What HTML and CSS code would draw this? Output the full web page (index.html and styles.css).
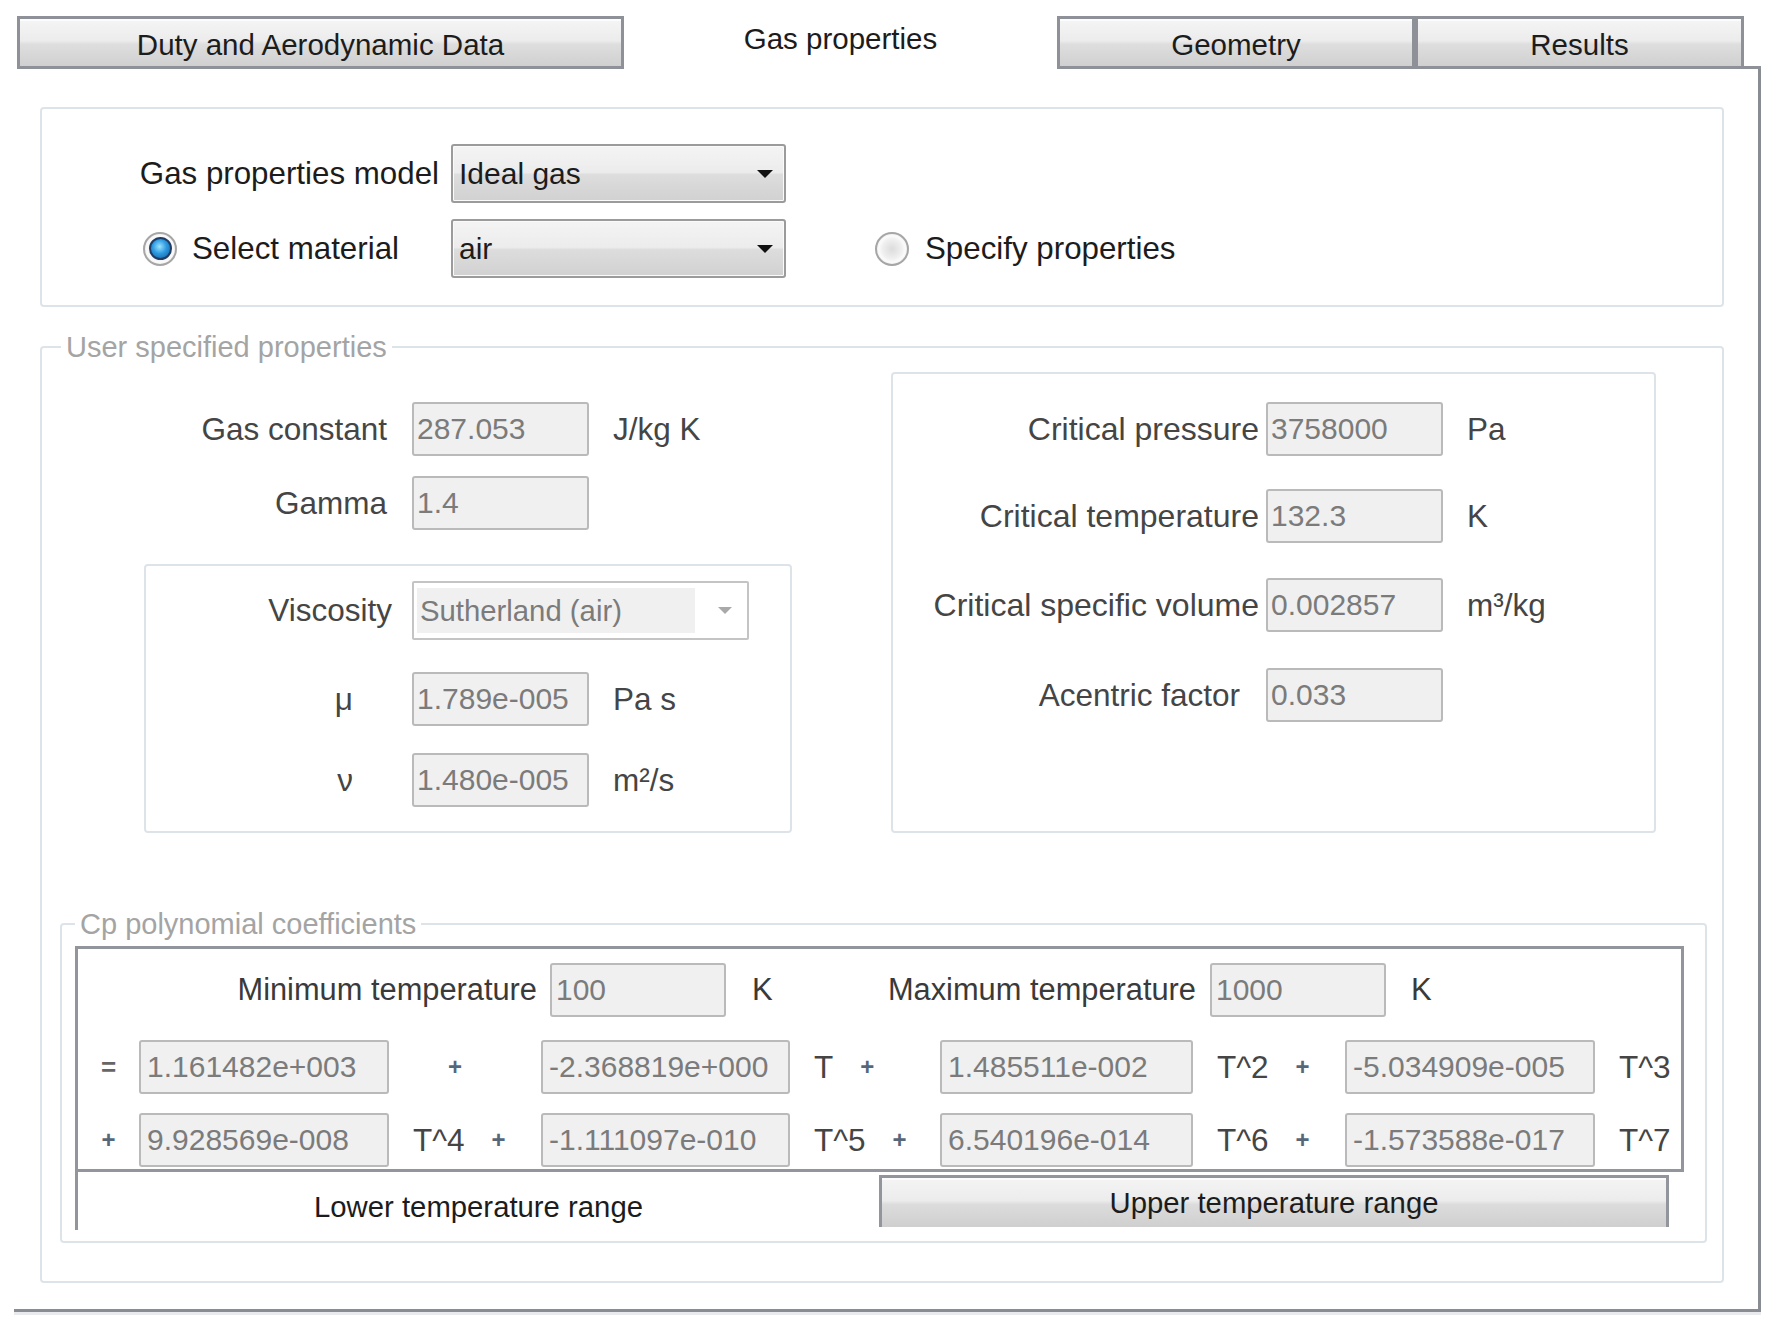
FILE: index.html
```html
<!DOCTYPE html>
<html lang="en">
<head>
<meta charset="utf-8">
<title>Gas properties</title>
<link rel="stylesheet" href="styles.css">
</head>
<body>
<div class="window">
  <div class="tabstrip">
    <div class="tab tab-duty">Duty and Aerodynamic Data</div>
    <div class="tab-active">Gas properties</div>
    <div class="tab tab-geom">Geometry</div>
    <div class="tab tab-results">Results</div>
    <div class="tab-fill"></div>
  </div>

  <div class="panel">
    <fieldset class="group group-model">
      <div class="row">
        <span class="lbl-model">Gas properties model</span>
        <div class="combo"><span class="combo-text">Ideal gas</span><span class="arrow"></span></div>
      </div>
      <div class="row row-material">
        <div class="opt opt-select"><span class="radio radio-on"></span><span class="opt-text">Select material</span></div>
        <div class="combo"><span class="combo-text">air</span><span class="arrow"></span></div>
        <div class="opt opt-specify"><span class="radio"></span><span class="opt-text">Specify properties</span></div>
      </div>
    </fieldset>

    <fieldset class="group group-user">
      <legend class="legend">User specified properties</legend>
      <div class="user-cols">
        <div class="user-left">
          <div class="frow">
            <span class="flabel flabel-gas">Gas constant</span>
            <span class="tb tb-prop">287.053</span>
            <span class="unit">J/kg K</span>
          </div>
          <div class="frow frow-gamma">
            <span class="flabel flabel-gas">Gamma</span>
            <span class="tb tb-prop">1.4</span>
          </div>
          <div class="subgroup visc">
            <div class="frow frow-combo">
              <span class="flabel flabel-visc">Viscosity</span>
              <div class="combo-dis"><span class="combo-field">Sutherland (air)</span><span class="arrow arrow-dis"></span></div>
            </div>
            <div class="frow frow-mu">
              <span class="flabel flabel-visc flabel-greek">μ</span>
              <span class="tb tb-prop">1.789e-005</span>
              <span class="unit">Pa s</span>
            </div>
            <div class="frow frow-nu">
              <span class="flabel flabel-visc flabel-greek">ν</span>
              <span class="tb tb-prop">1.480e-005</span>
              <span class="unit">m²/s</span>
            </div>
          </div>
        </div>

        <div class="subgroup crit">
          <div class="frow">
            <span class="flabel flabel-crit">Critical pressure</span>
            <span class="tb tb-prop">3758000</span>
            <span class="unit">Pa</span>
          </div>
          <div class="frow crow-2">
            <span class="flabel flabel-crit">Critical temperature</span>
            <span class="tb tb-prop">132.3</span>
            <span class="unit">K</span>
          </div>
          <div class="frow crow-3">
            <span class="flabel flabel-crit">Critical specific volume</span>
            <span class="tb tb-prop">0.002857</span>
            <span class="unit">m³/kg</span>
          </div>
          <div class="frow crow-4">
            <span class="flabel flabel-crit flabel-acentric">Acentric factor</span>
            <span class="tb tb-prop">0.033</span>
          </div>
        </div>
      </div>

      <fieldset class="group group-cp">
        <legend class="legend legend-cp">Cp polynomial coefficients</legend>
        <div class="tabpage">
          <div class="temp-row">
            <span class="tlabel tlabel-min">Minimum temperature</span>
            <span class="tb tb-temp">100</span>
            <span class="tunit tunit-min">K</span>
            <span class="tlabel tlabel-max">Maximum temperature</span>
            <span class="tb tb-temp tb-temp-max">1000</span>
            <span class="tunit tunit-max">K</span>
          </div>
          <div class="coef-grid">
            <span class="sym sym-eq">=</span>
            <span class="tb tb-coef">1.161482e+003</span>
            <span class="term term-lead"><span class="plus">+</span></span>
            <span class="tb tb-coef">-2.368819e+000</span>
            <span class="term"><span class="pow">T</span><span class="plus">+</span></span>
            <span class="tb tb-coef">1.485511e-002</span>
            <span class="term"><span class="pow">T^2</span><span class="plus">+</span></span>
            <span class="tb tb-coef">-5.034909e-005</span>
            <span class="term"><span class="pow">T^3</span></span>

            <span class="sym"><span class="plus plus-lead">+</span></span>
            <span class="tb tb-coef">9.928569e-008</span>
            <span class="term"><span class="pow">T^4</span><span class="plus">+</span></span>
            <span class="tb tb-coef">-1.111097e-010</span>
            <span class="term"><span class="pow">T^5</span><span class="plus">+</span></span>
            <span class="tb tb-coef">6.540196e-014</span>
            <span class="term"><span class="pow">T^6</span><span class="plus">+</span></span>
            <span class="tb tb-coef">-1.573588e-017</span>
            <span class="term"><span class="pow">T^7</span></span>
          </div>
        </div>
        <div class="bottom-tabs">
          <div class="btab-lower">Lower temperature range</div>
          <div class="btab-upper">Upper temperature range</div>
        </div>
      </fieldset>
    </fieldset>
  </div>
</div>
</body>
</html>
```

FILE: styles.css
```css
* {
  box-sizing: border-box;
}

html,
body {
  margin: 0;
  padding: 0;
  background: #ffffff;
}

body {
  font-family: "Liberation Sans", Arial, sans-serif;
  font-size: 30px;
  color: #1c1c1c;
}

.window {
  width: 1777px;
  height: 1329px;
  padding: 16px 0 0 14px;
  overflow: hidden;
}

/* ---------- top tab strip ---------- */
.tabstrip {
  display: flex;
  width: 1747px;
  height: 53px;
}

.tab {
  height: 53px;
  border: 3px solid #8f9199;
  background: linear-gradient(#f5f5f5 0%, #ececec 46%, #dedede 54%, #d0d0d0 100%);
  box-shadow: inset 0 2px 0 #fcfcfc;
  display: flex;
  align-items: center;
  justify-content: center;
  padding-top: 4px;
  font-size: 29.5px;
  color: #1c1c1c;
}

.tab-duty {
  margin-left: 3px;
  width: 607px;
}

.tab-active {
  width: 433px;
  display: flex;
  align-items: center;
  justify-content: center;
  padding-bottom: 7px;
  font-size: 29.5px;
}

.tab-geom {
  width: 358px;
}

.tab-results {
  width: 329px;
}

.tab-fill {
  flex: 1;
  border-bottom: 3px solid #8f9199;
}

/* ---------- panel ---------- */
.panel {
  width: 1747px;
  border-right: 3px solid #8a8c94;
  border-bottom: 3px solid #8a8c94;
  padding: 38px 34px 26px 26px;
  box-shadow: 0 3px 0 #e8eaed;
}

.group {
  margin: 0;
  padding: 0;
  min-width: 0;
  border: 2px solid #dde4e9;
  border-radius: 4px;
}

.legend {
  margin-left: 19px;
  padding: 0 5px;
  font-size: 29px;
  line-height: 36px;
  color: #a4a4a4;
}

/* ---------- group 1 ---------- */
.group-model {
  padding: 35px 0 27px 0;
}

.row {
  display: flex;
  align-items: center;
  height: 59px;
}

.row-material {
  margin-top: 16px;
}

.lbl-model {
  width: 397px;
  margin-right: 12px;
  text-align: right;
  font-size: 31.3px;
  white-space: nowrap;
}

.opt-text {
  font-size: 31.3px;
  white-space: nowrap;
}

.combo {
  width: 335px;
  height: 59px;
  border: 2px solid #9b9b9b;
  border-radius: 3px;
  background: linear-gradient(#f4f4f4 0%, #ececec 48%, #dddddd 52%, #d1d1d1 100%);
  box-shadow: inset 0 0 0 1px #fafafa;
  display: flex;
  align-items: center;
  justify-content: space-between;
  padding: 0 11px 0 6px;
}

.arrow {
  width: 0;
  height: 0;
  border-left: 8px solid transparent;
  border-right: 8px solid transparent;
  border-top: 8px solid #111111;
}

.opt {
  display: flex;
  align-items: center;
}

.opt-select {
  width: 409px;
  padding-left: 101px;
}

.opt-specify {
  margin-left: 89px;
}

.radio {
  flex: none;
  width: 34px;
  height: 34px;
  margin-right: 15px;
  border-radius: 50%;
  border: 2px solid #a6a6a6;
  background: radial-gradient(circle at 50% 50%, #dcdcdc 0, #efefef 45%, #fbfbfb 62%, #d4d4d4 100%);
  display: flex;
  align-items: center;
  justify-content: center;
}

.opt-specify .radio {
  margin-right: 16px;
}

.radio-on::after {
  content: "";
  width: 19px;
  height: 19px;
  border-radius: 50%;
  border: 2px solid #1f3d66;
  background: radial-gradient(circle at 45% 40%, #9be4ff 0, #2d9ae0 45%, #125a9c 100%);
}

/* ---------- group 2 ---------- */
.group-user {
  margin-top: 22px;
  padding: 0 0 38px 0;
}

.user-cols {
  display: flex;
  align-items: flex-start;
}

.user-left {
  width: 849px;
  margin-top: 37px;
}

.frow {
  display: flex;
  align-items: center;
  height: 54px;
}

.frow-gamma {
  margin-top: 20px;
}

.flabel {
  color: #454545;
  text-align: right;
  white-space: nowrap;
  font-size: 31.5px;
}

.flabel-gas {
  width: 345px;
  margin-right: 25px;
}

.tb {
  height: 54px;
  border: 2px solid #bababa;
  border-radius: 3px;
  background: #f0f0f0;
  color: #7b7b7b;
  padding-left: 3px;
  display: flex;
  align-items: center;
  white-space: nowrap;
  overflow: hidden;
}

.tb-prop {
  width: 177px;
}

.unit {
  margin-left: 24px;
  color: #454545;
  font-size: 31.5px;
}

.subgroup {
  border: 2px solid #dde4e9;
  border-radius: 4px;
}

.visc {
  width: 648px;
  height: 269px;
  margin: 34px 0 0 102px;
  padding-top: 15px;
}

.frow-combo {
  height: 59px;
}

.flabel-visc {
  width: 246px;
  margin-right: 20px;
}

.flabel-greek {
  padding-right: 39px;
}

.frow-mu {
  margin-top: 32px;
}

.frow-nu {
  margin-top: 27px;
}

.combo-dis {
  width: 337px;
  height: 59px;
  border: 2px solid #c4c4c4;
  border-radius: 2px;
  background: #ffffff;
  display: flex;
  align-items: center;
  justify-content: space-between;
  padding: 0 15px 0 3px;
}

.combo-field {
  width: 278px;
  height: 45px;
  background: #f0f0f0;
  color: #7b7b7b;
  display: flex;
  align-items: center;
  padding-left: 3px;
  font-size: 29.3px;
  white-space: nowrap;
}

.arrow-dis {
  border-left-width: 7px;
  border-right-width: 7px;
  border-top-width: 7px;
  border-top-color: #a9a9a9;
}

.crit {
  width: 765px;
  height: 461px;
  margin-top: 7px;
  padding-top: 28px;
}

.flabel-crit {
  width: 366px;
  margin-right: 7px;
  font-size: 32px;
}

.flabel-acentric {
  padding-right: 19px;
  font-size: 31.5px;
}

.crow-2 {
  margin-top: 33px;
}

.crow-3 {
  margin-top: 35px;
}

.crow-4 {
  margin-top: 36px;
}

/* ---------- group 3 ---------- */
.group-cp {
  margin: 73px 15px 0 18px;
  padding: 0 0 11px 0;
}

.legend-cp {
  margin-left: 13px;
}

.tabpage {
  margin: 4px 21px 0 13px;
  border: 3px solid #93959c;
  padding: 14px 0 2px 0;
}

.temp-row {
  display: flex;
  align-items: center;
  height: 54px;
}

.tlabel {
  color: #3a3a3a;
  text-align: right;
  white-space: nowrap;
  font-size: 30.8px;
}

.tlabel-min {
  width: 459px;
}

.tb-temp {
  width: 176px;
  margin-left: 13px;
  padding-left: 4px;
}

.tb-temp-max {
  margin-left: 14px;
}

.tunit {
  color: #3a3a3a;
  font-size: 31px;
}

.tunit-min {
  width: 154px;
  padding-left: 26px;
}

.tlabel-max {
  width: 316px;
}

.tunit-max {
  margin-left: 25px;
}

.coef-grid {
  display: grid;
  grid-template-columns: 61px 250px 152px 249px 150px 253px 152px 250px 1fr;
  grid-auto-rows: 54px;
  row-gap: 19px;
  margin-top: 23px;
  align-items: center;
}

.tb-coef {
  width: 100%;
  padding-left: 6px;
}

.sym {
  display: flex;
  justify-content: center;
  color: #666666;
}

.sym-eq {
  font-weight: bold;
  font-size: 26px;
}

.term {
  display: flex;
  align-items: center;
  padding-left: 24px;
}

.term-lead {
  padding-left: 58px;
}

.pow {
  color: #454545;
  font-size: 31.5px;
}

.plus {
  width: 16px;
  margin-left: 26px;
  text-align: center;
  font-size: 24px;
  font-weight: bold;
  color: #56677a;
}

.term-lead .plus,
.plus-lead {
  margin-left: 0;
}

.bottom-tabs {
  display: flex;
  height: 58px;
  margin: 0 21px 0 13px;
}

.btab-lower {
  width: 804px;
  border-left: 3px solid #93959c;
  display: flex;
  justify-content: center;
  align-items: center;
  padding-top: 11px;
  font-size: 29.3px;
  color: #1c1c1c;
}

.btab-upper {
  width: 790px;
  height: 52px;
  margin-top: 3px;
  border: 3px solid #93959c;
  border-bottom: none;
  background: linear-gradient(#f4f4f4 0%, #ececec 46%, #dcdcdc 54%, #cfcfcf 100%);
  box-shadow: inset 0 2px 0 #fcfcfc;
  display: flex;
  justify-content: center;
  align-items: center;
  font-size: 29.3px;
  color: #1c1c1c;
}
```
